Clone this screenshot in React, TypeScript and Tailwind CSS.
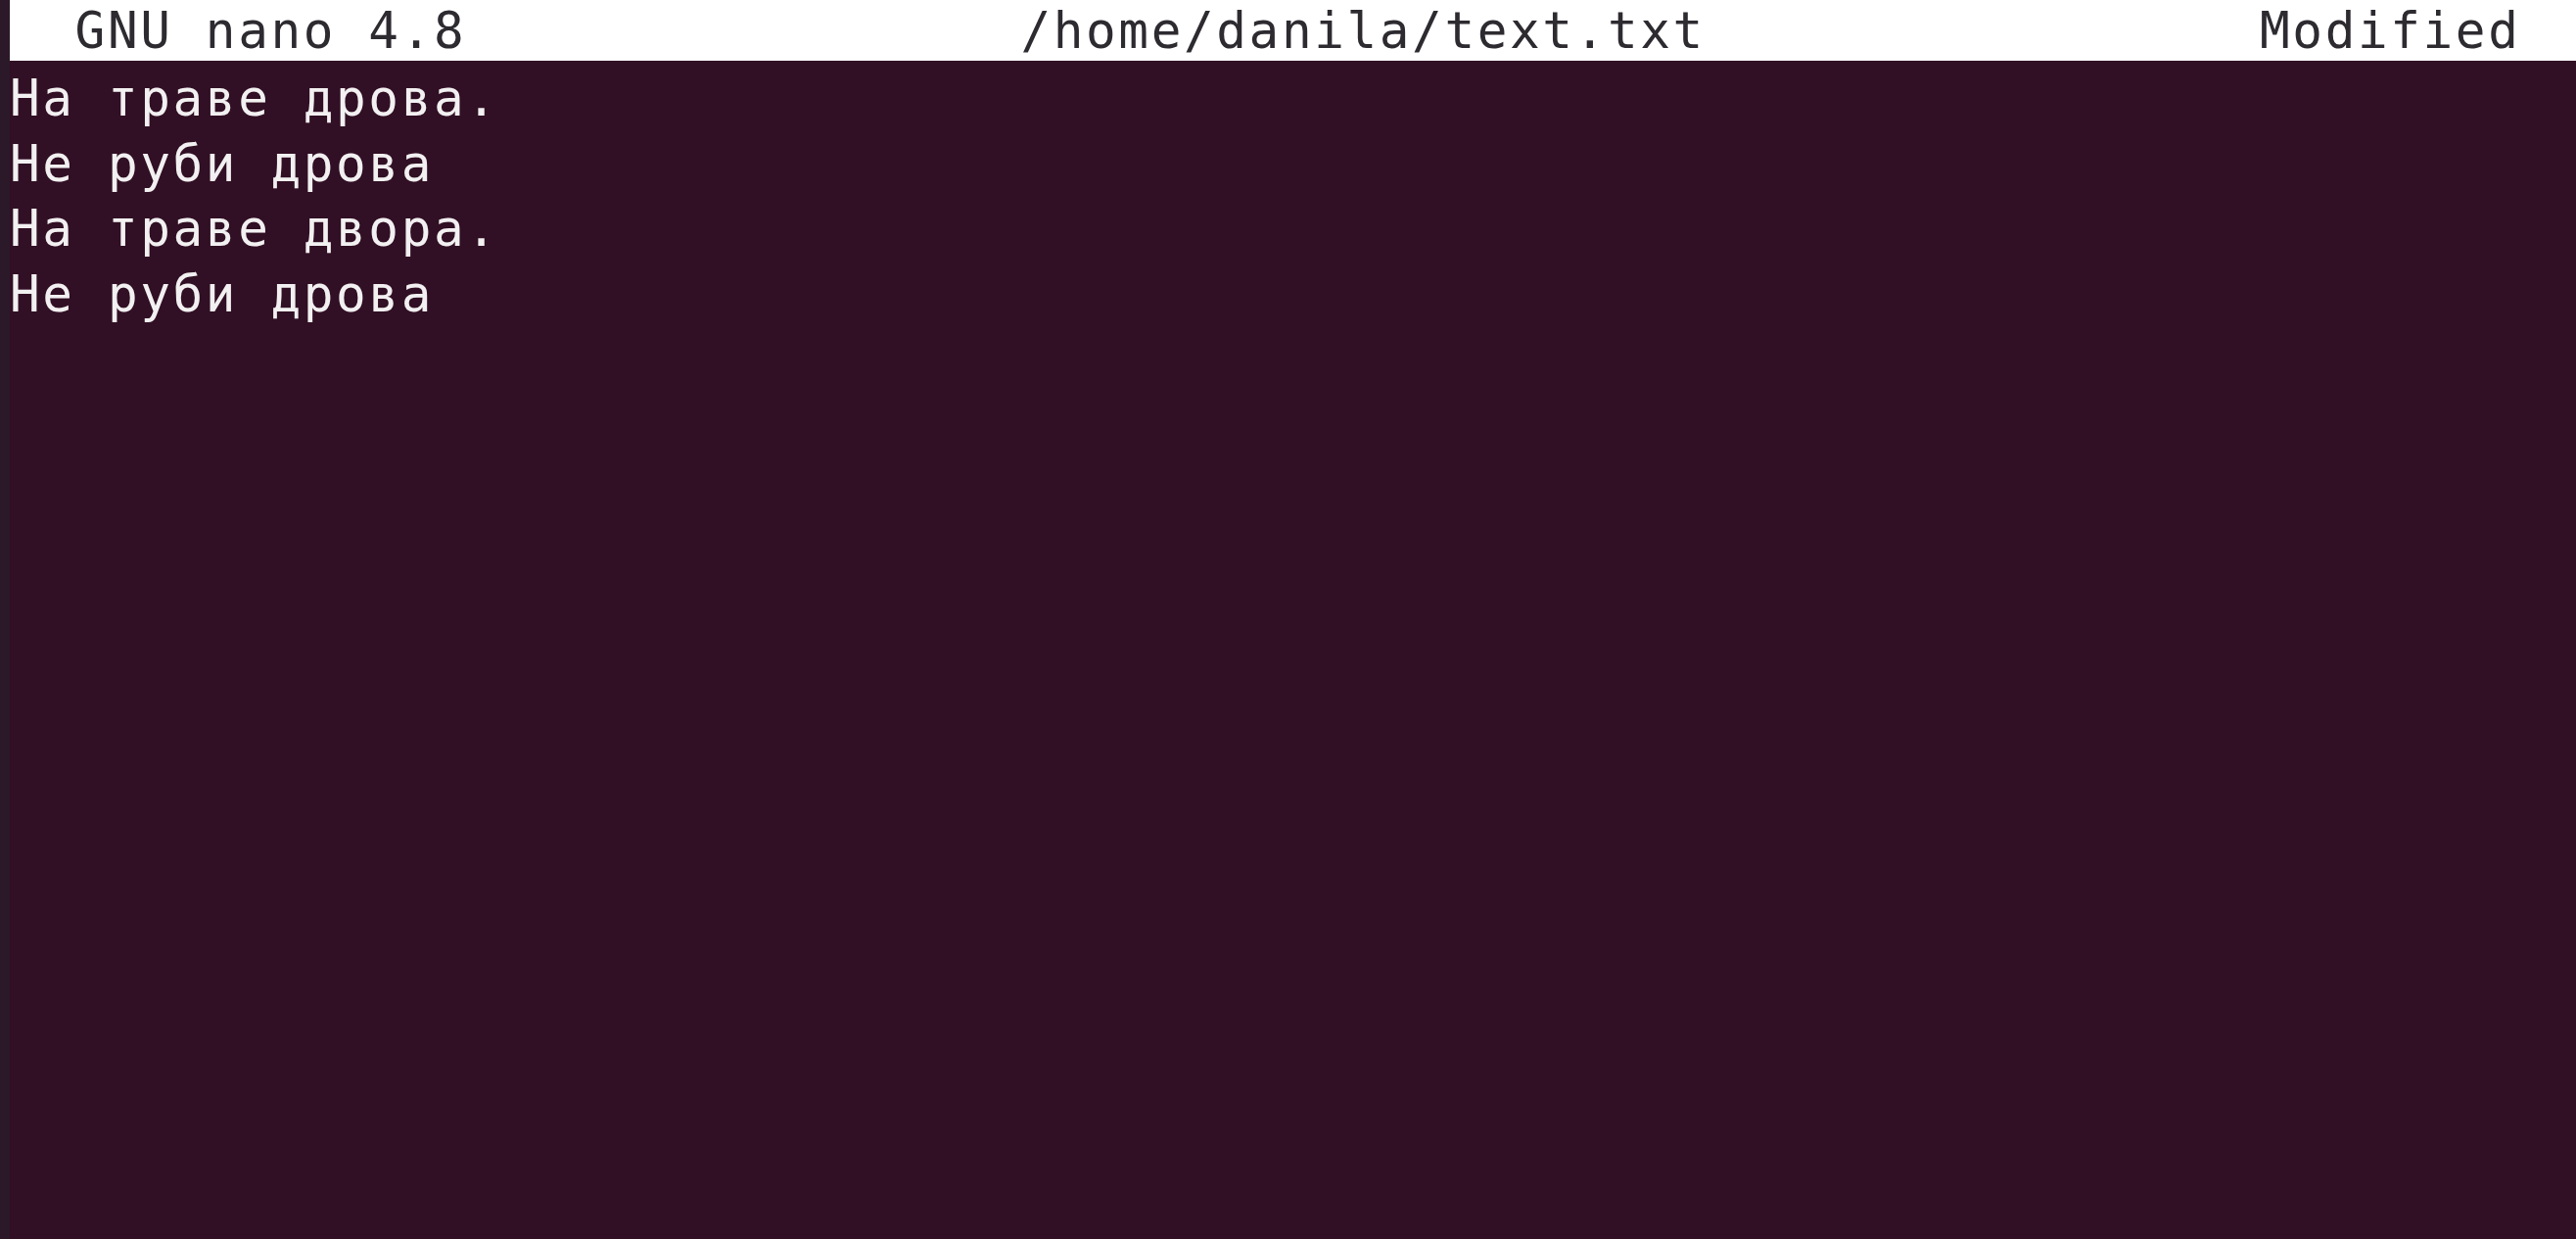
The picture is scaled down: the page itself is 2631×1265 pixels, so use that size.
const lines = ["На траве дрова.", "Не руби дрова", "На траве двора.", "Не руби дрова"];

// nano title bar, laid out on terminal columns
const title =
  "  GNU nano 4.8" + " ".repeat(17) + "/home/danila/text.txt" + " ".repeat(17) + "Modified";

export default function App() {
  return (
    <div className="flex h-screen w-screen overflow-hidden bg-[#310f24] font-['DejaVu_Sans_Mono',monospace] text-[51px] tracking-[2.6px]">
      <div className="w-[10px] shrink-0 bg-[#2b1829]" />
      <div className="flex min-w-0 flex-1 flex-col">
        <div className="h-[62px] shrink-0 overflow-hidden whitespace-pre bg-white pt-[1px] leading-[62px] text-[#2d2a30]">
          {title}
        </div>
        <div className="flex flex-col pt-[6px] text-[#f2f0f1]">
          {lines.map((line, i) => (
            <div key={i} className="h-[66.7px] whitespace-pre leading-[66.7px]">
              {line}
            </div>
          ))}
        </div>
      </div>
    </div>
  );
}
